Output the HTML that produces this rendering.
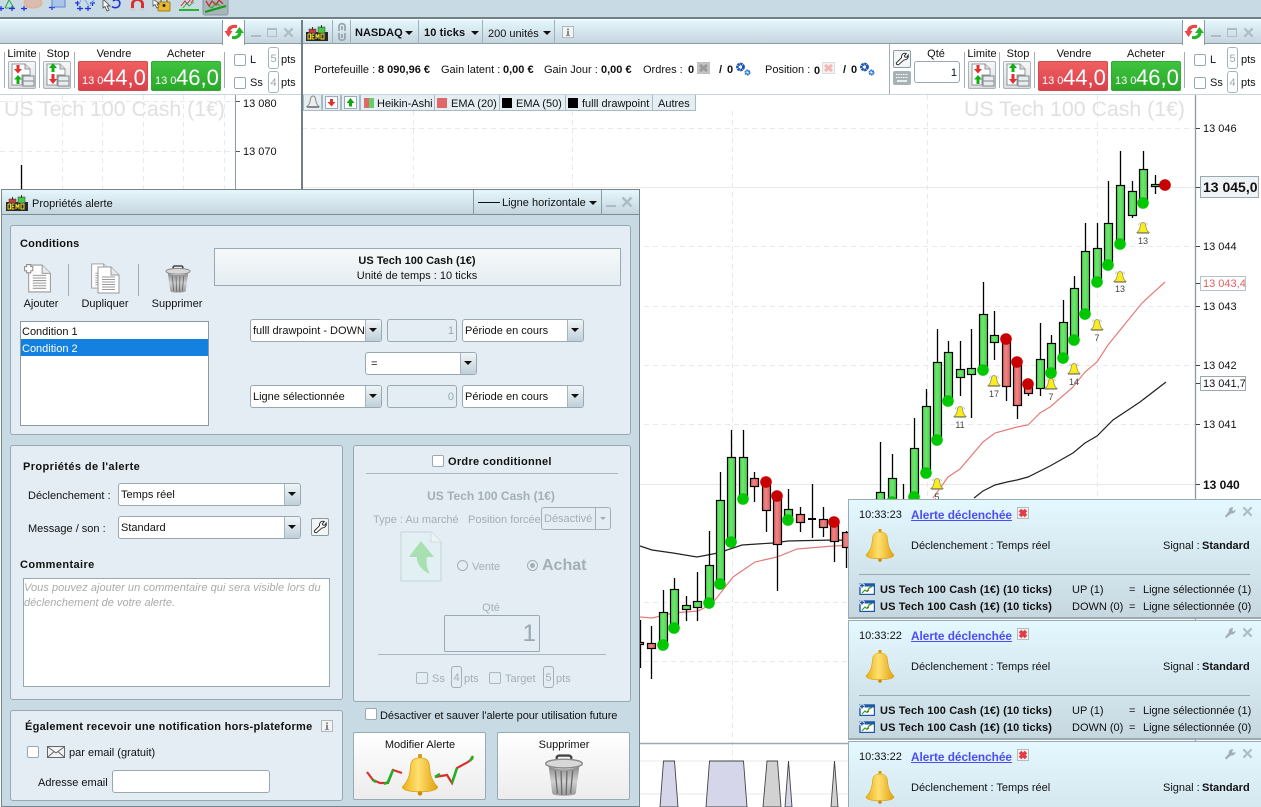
<!DOCTYPE html>
<html lang="fr"><head><meta charset="utf-8"><title>Propriétés alerte</title>
<style>
html,body{margin:0;padding:0;width:1261px;height:807px;overflow:hidden;background:#fff}
body{position:relative;font:11px/14px "Liberation Sans",Arial,sans-serif;color:#111}
.a,.t,.b{position:absolute;box-sizing:border-box}
.t{white-space:nowrap;height:14px;margin-top:1px}
.bd{font-weight:bold}
.c{text-align:center;transform:translateX(-50%)}
.title{background:linear-gradient(#e5f7fd,#c5d5de)}
.sep{position:absolute;width:1px;background:#9fb0ba}
.panel{position:absolute;box-sizing:border-box;background:#e3edf3;border:1px solid #97a8b2;border-radius:3px}
.sel{position:absolute;box-sizing:border-box;background:#fff;border:1px solid #98a9b3;border-radius:3px;height:23px;line-height:23px;padding-left:2px;white-space:nowrap;overflow:hidden}
.sel i{position:absolute;right:0;top:0;bottom:0;width:15px;background:linear-gradient(#f0f5f7,#bfd0d9);border-left:1px solid #a5b5be}
.sel i:after{content:"";position:absolute;left:3px;top:8px;border:4px solid transparent;border-top:4px solid #111;border-bottom:0}
.dis{position:absolute;box-sizing:border-box;background:#e3edf3;border:1px solid #98a9b3;border-radius:3px;text-align:right;color:#9aa8b0;padding-right:2px;line-height:23px;height:23px}
.ck{position:absolute;box-sizing:border-box;width:12px;height:12px;background:#fff;border:1px solid #98a9b3;border-radius:2px}
.ckd{background:#e3edf3;border-color:#a9b7bf}
.num{position:absolute;box-sizing:border-box;width:11px;height:22px;background:#fff;border:1px solid #a5b3bb;border-radius:3px;text-align:center;line-height:22px;color:#9aa8b0}
.sell,.buy{position:absolute;box-sizing:border-box;top:61px;width:70px;height:30px;border-radius:2px;color:#fff;white-space:nowrap}
.sell{background:linear-gradient(#f06060,#d8414b);border:1px solid #d04a50}
.buy{background:linear-gradient(#3fc43f,#2aa82a);border:1px solid #35a835}
.sell b,.buy b{position:absolute;left:3px;top:12px;font-weight:normal;font-size:11px;line-height:14px}
.sell u,.buy u{position:absolute;left:24px;top:3px;text-decoration:none;font-size:22px;line-height:26px}
.ob{position:absolute;top:61px;width:28px;height:28px;box-sizing:border-box;border:1px solid #a8b4ba;border-radius:2px;background:linear-gradient(#f7f7f7,#dcdcdc)}
.tb{position:absolute;top:95px;height:16px;box-sizing:border-box;background:#e4eef3;border:1px solid #a9bac4;border-top:0;line-height:19px;white-space:nowrap}
.sw{display:inline-block;width:10px;height:10px;vertical-align:-1px;margin:0 4px 0 2px}
.wb{position:absolute;box-sizing:border-box;background:#f3f6f7;border:1px solid #8b9ba3;border-radius:2px}
.notif{position:absolute;left:848px;width:413px;box-sizing:border-box;background:linear-gradient(#e4f8ff,#c6d7e0);border-left:1px solid #9aabb5;border-top:1px solid #9aabb5}
.big{position:absolute;box-sizing:border-box;background:linear-gradient(#fff,#ececec);border:1px solid #98a9b3;border-radius:2px}
.ax{font-size:11px}
.bl{font-size:9px;color:#444;line-height:10px;height:10px}
.wm{margin-top:0;height:24px;line-height:24px;font-size:21.300px;color:#e0e0e0}
.lk{color:#4c4cf4;text-decoration:underline;font-size:11.800px;font-weight:bold}
.nb{letter-spacing:.13px;font-weight:bold}
.tri{position:absolute;width:0;height:0;border-left:4px solid transparent;border-right:4px solid transparent;border-top:4px solid #111}
svg{position:absolute;display:block;overflow:visible}
</style></head><body>
<svg width="0" height="0" style="left:0;top:0">
<defs>
<linearGradient id="gg" x1="0" x2="1" y1="0" y2="0"><stop offset="0" stop-color="#4ed44e"/><stop offset=".45" stop-color="#6ce86c"/><stop offset="1" stop-color="#4ccc4c"/></linearGradient>
<linearGradient id="rg" x1="0" x2="1" y1="0" y2="0"><stop offset="0" stop-color="#dc5f5f"/><stop offset=".45" stop-color="#f08585"/><stop offset="1" stop-color="#d85a5a"/></linearGradient>
<linearGradient id="gold" x1="0" x2="1" y1="0" y2="0"><stop offset="0" stop-color="#eab016"/><stop offset=".45" stop-color="#ffe070"/><stop offset="1" stop-color="#e0a010"/></linearGradient>
<linearGradient id="tr" x1="0" x2="0" y1="0" y2="1"><stop offset="0" stop-color="#8a8a8a"/><stop offset=".5" stop-color="#d0d0d0"/><stop offset="1" stop-color="#999"/></linearGradient>
<symbol id="bell" viewBox="0 0 30 33"><rect x="13.5" y="0" width="3" height="4" fill="#d99a0a"/><path d="M15 3C10 3 8 5 7.600 9 7 16 6 21 1 26 2 29 9 29.800 15 29.800S28 29 29 26C24 21 23 16 22.400 9 22 5 20 3 15 3Z" fill="url(#gold)" stroke="#d9a010" stroke-width=".6"/><circle cx="15" cy="31" r="1.800" fill="#c98a10"/></symbol>
<symbol id="sb" viewBox="0 0 14 14"><path d="M7 1.500C5 1.500 4.400 3 4.200 5 4 8 3 10 1 11.500L13 11.500C11 10 10 8 9.800 5 9.600 3 9 1.500 7 1.500Z" fill="#fbec1e" stroke="#8f8f60" stroke-width=".8"/><rect x="1" y="11.400" width="12" height="1.300" fill="#8f8f60"/><path d="M2.500 4 3.500 1.500M11.500 4 10.500 1.500" stroke="#bbb" stroke-width=".8"/></symbol>
<symbol id="wr" viewBox="0 0 18 18"><path d="M3 15 2.500 13.500 8.500 7.500C8 5 9.500 2.500 12.500 2.500L13.800 3 11.500 5.500 12.500 7 14.500 7 16 4.500C16.500 7 15.500 10 11 10.200L5 15.500Z" fill="#fff" stroke="#222" stroke-width="1"/></symbol>
<symbol id="info" viewBox="0 0 12 12"><rect x=".5" y=".5" width="11" height="11" fill="#f2f5f6" stroke="#b0b8bc"/><rect x="5" y="2.500" width="2" height="1.800" fill="#888"/><rect x="5" y="5" width="2" height="4.500" fill="#888"/><rect x="4" y="9" width="4" height="1" fill="#888"/></symbol>
<symbol id="demo" viewBox="0 0 23 16"><rect x="0" y="7" width="22" height="9" fill="#262a2e"/><rect x="3" y="4" width="7" height="4" fill="#c83c3c" stroke="#333" stroke-width=".5"/><rect x="6" y="2" width="1" height="3" fill="#333"/><rect x="12" y="2" width="7" height="6" fill="#48c848" stroke="#333" stroke-width=".5"/><rect x="15" y="0" width="1" height="3" fill="#333"/><path d="M2 9v5h2.500V9H2M6 9v5h2.500M6 11.500h2M6 9h2.500M10 14V9l1.500 3L13 9v5M15 9h3v5h-3z" fill="none" stroke="#f5dd20" stroke-width="1"/></symbol>
<symbol id="refresh" viewBox="0 0 20 20"><path d="M3 9C3 5 7 2 13 3L13 6C9 5.500 7 7 6.500 9L8.500 9 4.500 15 .5 9Z" fill="#e84848"/><path d="M15.500 5 20 11 17.500 11C17.500 15 13 18 8 17L8 14C12 14.500 13.500 13 14 11L11 11Z" fill="#28b428"/></symbol>
<symbol id="lim" viewBox="0 0 26 26"><path d="M6 2H16L21 7V13H13V23H3V2Z" fill="#fff" stroke="#8c979d"/><path d="M16 2V7H21" fill="#ddd" stroke="#8c979d"/><path d="M7.500 3H10.500V7H13L9 11.500 5 7H7.500Z" fill="#e03030"/><path d="M9 13 13 17.500H10.500V22H7.500V17.500H5Z" fill="#10b010"/><rect x="14" y="14" width="11" height="5" fill="#e8ecee" stroke="#7c878d"/><rect x="14" y="19" width="11" height="5" fill="#e8ecee" stroke="#7c878d"/></symbol>
<symbol id="stp" viewBox="0 0 26 26"><path d="M6 2H16L21 7V13H13V23H3V2Z" fill="#fff" stroke="#8c979d"/><path d="M16 2V7H21" fill="#ddd" stroke="#8c979d"/><path d="M9 1 13 6H10.500V10H7.500V6H5Z" fill="#10b010"/><path d="M7.500 12H10.500V17H13L9 22 5 17H7.500Z" fill="#e03030"/><rect x="14" y="14" width="11" height="5" fill="#e8ecee" stroke="#7c878d"/><rect x="14" y="19" width="11" height="5" fill="#e8ecee" stroke="#7c878d"/></symbol>
<symbol id="gear" viewBox="0 0 16 14"><circle cx="5.500" cy="5" r="3" fill="none" stroke="#1850b0" stroke-width="2.800" stroke-dasharray="2.200 .5"/><circle cx="12.500" cy="10.500" r="2" fill="none" stroke="#1f6fd0" stroke-width="2" stroke-dasharray="1.600 .4"/></symbol>
<symbol id="xk" viewBox="0 0 12 12"><rect x=".5" y=".5" width="11" height="11" fill="#f3f3f3" stroke="#b5bcc0"/><path d="M3 3 9 9M9 3 3 9" stroke="#e23c48" stroke-width="3.600"/></symbol>
<symbol id="wg" viewBox="0 0 12 12"><path d="M1 10 2 11.500 7 7.500C9.500 8 11.500 6 11.500 3.500L9.500 5 8 4 9.500 1.500C6.500.5 4.500 2.500 4.800 5.500Z" fill="#a3adb3"/></symbol>
<symbol id="xg" viewBox="0 0 12 12"><path d="M1.500 1.500 10.500 10.500M10.500 1.500 1.500 10.500" stroke="#aebcc4" stroke-width="2.400"/></symbol>
<symbol id="nchart" viewBox="0 0 16 12"><rect x="1" y="1" width="14.500" height="10.500" fill="#fff" stroke="#1e56a8" stroke-width="1.400"/><rect x="1" y="1" width="14.500" height="2.500" fill="#1e56a8"/><path d="M3 10 6 7 8 8.500 10 5 13 3.500" fill="none" stroke="#20a820" stroke-width="1.200"/><path d="M8 8.500 10 7" stroke="#e03030"/><path d="M3 0V5M.5 2.500H5.500" stroke="#fff" stroke-width="3"/><path d="M3 .5V4.500M1 2.500H5" stroke="#1e56a8" stroke-width="1.500"/></symbol>
<symbol id="trash" viewBox="0 0 26 30"><path d="M8 5V2.500C8 1.500 9 1 10 1H16C17 1 18 1.500 18 2.500V5" fill="none" stroke="#444" stroke-width="1.600"/><ellipse cx="13" cy="6.500" rx="12.500" ry="3" fill="#d8d8d8" stroke="#8a8a8a"/><path d="M2.500 8.500 5 27C5.500 29 20.500 29 21 27L23.500 8.500C18 11 8 11 2.500 8.500Z" fill="url(#tr)"/><path d="M7 11 8.500 27M11 11.500 11.500 28M15 11.500 14.500 28M19 11 17.500 27" stroke="#6c6c6c" stroke-width=".9"/></symbol>
<symbol id="page" viewBox="0 0 28 30"><path d="M5 2H18L26 10V28H5Z" fill="#fff" stroke="#999"/><path d="M18 2V10H26" fill="#e8e8e8" stroke="#999"/><path d="M9 12H22M9 14.500H22M9 17H22M9 19.500H22M9 22H22M9 24.500H22" stroke="#9a9a9a"/></symbol>
</defs></svg>

<div class="a" style="left:0;top:0;width:1261px;height:19px;background:#c8dae4;border-bottom:2px solid #6f8089"></div>
<svg width="235" height="18" viewBox="0 0 235 18" style="left:0;top:0" fill="none">
<rect x="203" y="-4" width="25" height="19" rx="2" fill="#a8b5bc" stroke="#8a989f"/>
<path d="M5 8 9 0M9 0 14 8M5 8H14" stroke="#22aa44" stroke-width="1"/>
<path d="M-2 8.500H4M1 6V11M9 8.500H15M12 6V11M21 8.500H27M24 6V11M49 7.500H55M52 5V10M75 3H80M77.500 1V6M90 3H95M92.500 1V6M77 8.500H83M80 6V11M85 8.500H91M88 6V11" stroke="#1f30e0" stroke-width="1.200"/>
<ellipse cx="33" cy="3" rx="9" ry="5" fill="#d8bcaf" stroke="#f0a878"/>
<rect x="52" y="-3" width="13" height="10" fill="#a9c6e8" stroke="#5a86d8"/>
<path d="M78 6 81 0M89 6 85 0M90 6 94 0" stroke="#7aa8ea"/>
<path d="M103 -1V8L105 6.500 107 11 109 10 107 6H110Z" fill="#fff" stroke="#555" stroke-width=".9"/>
<path d="M113 1C117 -2 121 1 119.500 5 118.500 8 114 8.500 112 6.500" stroke="#2030e0" stroke-width="1.600"/>
<path d="M131 10V4C131 -3 144 -3 144 4V10H141V4C141 0 134 0 134 4V10Z" fill="#d83030"/><rect x="130.500" y="8" width="4" height="3" fill="#ccc"/><rect x="140.500" y="8" width="4" height="3" fill="#ccc"/>
<rect x="158" y="2" width="12" height="9" rx="1" fill="#e8b830" stroke="#aa8010"/><path d="M161 2V0M167 2V0" stroke="#777" stroke-width="1.500"/><circle cx="164" cy="5.500" r="1.500" fill="#222"/><path d="M153 -1V6L155 4.500 157 8 158.500 7 157 4H159.500Z" fill="#fff" stroke="#555" stroke-width=".8"/>
<path d="M181 6 185 1 187 4 191 -1M191 3 194 -1" stroke="#d03030"/><path d="M179 10H199" stroke="#10b010" stroke-width="1.800"/><path d="M183 8 187 3 189 6 194 2" stroke="#20a020" stroke-width=".8"/>
<path d="M205 12 226 6" stroke="#10a010" stroke-width="2"/><path d="M206 1 209 6 212 1 216 5 219 0 223 4" stroke="#c83030" stroke-width="1.300"/><path d="M209 6 212 8 216 3 220 6" stroke="#20a020"/>
</svg>

<!-- MAIN CHART -->
<svg width="1261" height="807" viewBox="0 0 1261 807" style="left:0;top:0" fill="none">
<g stroke="#e9e9e9" stroke-width="1">
<path d="M0 101.500H236M0 151.500H236M302 128.500H1196M302 246.500H1196M302 306.500H1196M302 365.500H1196M302 424.500H1196M302 602.500H1196M302 661.500H1196" stroke-dasharray="5 4"/>
<path d="M62.500 95V190M102.500 95V190M143.500 95V190M183.500 95V190M224.500 95V190M413.500 111V743M572.500 111V743M732.500 111V807M927.500 95V500M1097.500 95V500" stroke-dasharray="5 4"/>
<path d="M22 95V190M302 187.500H1196M302 484.500H1196M640 761H850M640 794H850" stroke="#e9e9e9"/>
</g>
<path d="M21.500 165V190" stroke="#000" stroke-width="1.300"/>
<path d="M235.500 95V190" stroke="#8b9ba3"/>
<path d="M236 101.500H240M236 151.500H240" stroke="#555"/>
<path d="M640 743.500H850" stroke="#9aabb5" stroke-width="1.500"/>
<path d="M1195.500 95V743" stroke="#8b9ba3" stroke-width="1.300"/>
<path d="M1196 128.500H1200M1196 187.500H1200M1196 246.500H1200M1196 283.500H1200M1196 306.500H1200M1196 365.500H1200M1196 383.500H1200M1196 424.500H1200M1196 484.500H1200" stroke="#444"/>
<path d="M660 807 663.500 761H674.500L678 807ZM706 807 709.500 761H743.500L747 807ZM785 807 788.500 761 792 807Z" fill="#d5d6ea" stroke="#444" stroke-width=".9"/>
<path d="M763 807 767 761H777.500L781 807ZM831 807 834.500 761 838 807Z" fill="#d2d2d2" stroke="#444" stroke-width=".9"/>
<path d="M640 617 652 618 673 613 698 611 708 606 715 600 733 577 755 562 777 557 797 549 833 546 880 544M933 498 948 477 960 469 983 442 995 433 1017 427 1028 425 1040 413 1050 407 1072 388 1085 372 1097 362 1108 345 1142 303 1165 282" stroke="#e67a7a" stroke-width="1.200"/>
<path d="M640 546 652 550 673 553 697 557 718 553 742 545 773 543 788 541 833 540 880 541M974 498 983 491 995 485 1007 482 1017 480 1028 477 1050 466 1073 453 1085 443 1097 436 1113 420 1140 402 1166 382" stroke="#222" stroke-width="1.200"/>
<!-- wicks -->
<path stroke="#000" stroke-width="1.300" d="M640.500 620V668M651.500 626V679M663.500 590V645M674.500 578V628M686.500 596V621M697.500 572V621M709.500 531V603M720.500 472V584M731.500 430V542M743.500 430V499M754.500 472V502M766.500 482V532M777.500 496V591M788.500 489V520M800.500 507V532M812.500 484V538M823.500 507V537M834.500 522V562M846.500 531V568M880.500 442V499M892.500 454V499M903.500 484V499M914.500 418V497M926.500 389V473M937.500 329V440M948.500 341V401M960.500 341V396M971.500 329V418M983.500 282V370M994.500 311V360M1006.500 339V401M1017.500 362V419M1028.500 384V396M1040.500 323V396M1051.500 335V373M1063.500 300V358M1074.500 276V340M1085.500 223V314M1097.500 223V282M1108.500 181V265M1120.500 151V244M1132.500 181V218M1143.500 151V203M1155.500 175V194"/>
<!-- red bodies -->
<g fill="url(#rg)" stroke="#000" stroke-width="1.200">
<rect x="647.500" y="643.500" width="8" height="5"/><rect x="750.500" y="478.500" width="8" height="8"/><rect x="762.500" y="482.500" width="8" height="28"/><rect x="773.500" y="496.500" width="8" height="48"/><rect x="796.500" y="514.500" width="8" height="8"/><rect x="819.500" y="519.500" width="8" height="8"/><rect x="830.500" y="522.500" width="8" height="19"/><rect x="842.500" y="532.500" width="8" height="15"/><rect x="1002.500" y="339.500" width="8" height="47"/><rect x="1013.500" y="362.500" width="8" height="43"/><rect x="1024.500" y="384.500" width="8" height="9"/><rect x="636.500" y="642.500" width="7" height="2"/>
</g>
<!-- green bodies -->
<g fill="url(#gg)" stroke="#000" stroke-width="1.200">
<rect x="659.500" y="612.500" width="8" height="33"/><rect x="670.500" y="589.500" width="8" height="39"/><rect x="682.500" y="605.500" width="8" height="4"/><rect x="693.500" y="601.500" width="8" height="6"/><rect x="705.500" y="565.500" width="8" height="38"/><rect x="716.500" y="500.500" width="8" height="84"/><rect x="727.500" y="457.500" width="8" height="85"/><rect x="739.500" y="457.500" width="8" height="42"/><rect x="784.500" y="509.500" width="8" height="11"/><rect x="876.500" y="492.500" width="8" height="10"/><rect x="888.500" y="478.500" width="8" height="24"/><rect x="910.500" y="448.500" width="8" height="49"/><rect x="922.500" y="406.500" width="8" height="67"/><rect x="933.500" y="362.500" width="8" height="78"/><rect x="944.500" y="352.500" width="8" height="49"/><rect x="956.500" y="369.500" width="8" height="8"/><rect x="967.500" y="368.500" width="8" height="6"/><rect x="979.500" y="314.500" width="8" height="56"/><rect x="990.500" y="335.500" width="8" height="7"/><rect x="1036.500" y="359.500" width="8" height="29"/><rect x="1047.500" y="343.500" width="8" height="30"/><rect x="1059.500" y="322.500" width="8" height="36"/><rect x="1070.500" y="288.500" width="8" height="52"/><rect x="1081.500" y="251.500" width="8" height="63"/><rect x="1093.500" y="248.500" width="8" height="34"/><rect x="1104.500" y="223.500" width="8" height="42"/><rect x="1116.500" y="185.500" width="8" height="59"/><rect x="1128.500" y="191.500" width="8" height="24"/><rect x="1139.500" y="169.500" width="8" height="34"/><rect x="1151.500" y="184.500" width="8" height="2"/>
</g>
<path d="M808 519H816" stroke="#000" stroke-width="2"/>
<g fill="#00c800">
<circle cx="663" cy="645" r="5.800"/><circle cx="674" cy="628" r="5.800"/><circle cx="709" cy="603" r="5.800"/><circle cx="720" cy="584" r="5.800"/><circle cx="731" cy="542" r="5.800"/><circle cx="743" cy="499" r="5.800"/><circle cx="788" cy="520" r="5.800"/><circle cx="892" cy="502" r="5.800"/><circle cx="914" cy="497" r="5.800"/><circle cx="926" cy="473" r="5.800"/><circle cx="937" cy="440" r="5.800"/><circle cx="948" cy="401" r="5.800"/><circle cx="983" cy="370" r="5.800"/><circle cx="1051" cy="373" r="5.800"/><circle cx="1063" cy="358" r="5.800"/><circle cx="1074" cy="340" r="5.800"/><circle cx="1085" cy="314" r="5.800"/><circle cx="1097" cy="282" r="5.800"/><circle cx="1108" cy="265" r="5.800"/><circle cx="1120" cy="244" r="5.800"/><circle cx="1143" cy="203" r="5.800"/>
</g>
<g fill="#c80000">
<circle cx="766" cy="482" r="5.800"/><circle cx="777" cy="496" r="5.800"/><circle cx="834" cy="522" r="5.800"/><circle cx="1006" cy="339" r="5.800"/><circle cx="1017" cy="362" r="5.800"/><circle cx="1028" cy="384" r="5.800"/><circle cx="1165" cy="185" r="5.800"/>
</g>
<use href="#sb" x="1136" y="221" width="14" height="14"/><use href="#sb" x="1113" y="270" width="14" height="14"/><use href="#sb" x="1090" y="318" width="14" height="14"/><use href="#sb" x="1067" y="362" width="14" height="14"/><use href="#sb" x="1044" y="377" width="14" height="14"/><use href="#sb" x="987" y="374" width="14" height="14"/><use href="#sb" x="953" y="405" width="14" height="14"/><use href="#sb" x="930" y="477" width="14" height="14"/>
</svg>
<div class="t bl c" style="left:1143px;top:235px">13</div><div class="t bl c" style="left:1120px;top:283px">13</div><div class="t bl c" style="left:1097px;top:332px">7</div><div class="t bl c" style="left:1074px;top:376px">14</div><div class="t bl c" style="left:1051px;top:391px">7</div><div class="t bl c" style="left:994px;top:388px">17</div><div class="t bl c" style="left:960px;top:419px">11</div><div class="t bl c" style="left:937px;top:491px">5</div>

<div class="t wm" style="left:4px;top:97px">US Tech 100 Cash (1€)</div>
<div class="t wm" style="left:964px;top:97px">US Tech 100 Cash (1€)</div>
<div class="t ax" style="left:243px;top:96px">13 080</div><div class="t ax" style="left:243px;top:144px">13 070</div>
<div class="t ax" style="left:1203px;top:121px">13 046</div>
<div class="t ax" style="left:1203px;top:239px">13 044</div>
<div class="t ax" style="left:1203px;top:299px">13 043</div>
<div class="t ax" style="left:1203px;top:358px">13 042</div>
<div class="t ax" style="left:1203px;top:417px">13 041</div>
<div class="t bd" style="left:1203px;top:477px;font-size:12px">13 040</div>
<div class="a" style="left:1200px;top:176px;width:59px;height:22px;background:#f0f3f5;border:1px solid #9aa8b0;line-height:21px;font-size:14px;font-weight:bold;padding-left:2px;white-space:nowrap">13 045,0</div>
<div class="a" style="left:1200px;top:276px;width:46px;height:15px;background:#fff;border:1px solid #b5c2c9;line-height:14px;color:#e06060;padding-left:2px;white-space:nowrap;overflow:hidden">13 043,4</div>
<div class="a" style="left:1200px;top:376px;width:46px;height:15px;background:#fff;border:1px solid #9aa8b0;line-height:14px;padding-left:2px;white-space:nowrap;overflow:hidden">13 041,7</div>

<!-- LEFT PANE HEADER -->
<div class="a title" style="left:0;top:20px;width:301px;height:24px;border-bottom:1px solid #8b9ba3"></div>
<div class="a" style="left:222px;top:20px;width:23px;height:25px;background:#fff;border-left:1px solid #8b9ba3;border-right:1px solid #8b9ba3"></div>
<svg width="20" height="20" style="left:224px;top:22px"><use href="#refresh" width="20" height="20"/></svg>
<div class="a" style="left:251px;top:35px;width:10px;height:2px;background:#aebcc4"></div>
<div class="a" style="left:267px;top:28px;width:10px;height:9px;border:1px solid #aebcc4;border-top-width:2px"></div>
<svg width="11" height="11" style="left:283px;top:27px"><use href="#xg" width="11" height="11"/></svg>
<div class="a" style="left:301px;top:20px;width:2px;height:170px;background:#6f8089"></div>
<div class="a" style="left:0;top:94px;width:301px;height:1px;background:#c7d6de"></div>
<div class="sep" style="left:4px;top:52px;height:36px"></div><div class="sep" style="left:39px;top:52px;height:36px"></div><div class="sep" style="left:74px;top:52px;height:36px"></div><div class="sep" style="left:224px;top:52px;height:36px"></div>
<div class="t c" style="left:22px;top:46px">Limite</div><div class="t c" style="left:58px;top:46px">Stop</div><div class="t c" style="left:114px;top:46px">Vendre</div><div class="t c" style="left:186px;top:46px">Acheter</div>
<div class="ob" style="left:8px"><svg width="26" height="26" style="left:0;top:0"><use href="#lim" width="26" height="26"/></svg></div>
<div class="ob" style="left:43px"><svg width="26" height="26" style="left:0;top:0"><use href="#stp" width="26" height="26"/></svg></div>
<div class="sell" style="left:78px"><b>13 0</b><u>44,0</u></div>
<div class="buy" style="left:151px"><b>13 0</b><u>46,0</u></div>
<div class="ck" style="left:234px;top:54px"></div><div class="t" style="left:250px;top:52px">L</div><div class="num" style="left:268px;top:47px">5</div><div class="t" style="left:281px;top:52px">pts</div>
<div class="ck" style="left:234px;top:77px"></div><div class="t" style="left:250px;top:75px">Ss</div><div class="num" style="left:268px;top:71px">4</div><div class="t" style="left:281px;top:75px">pts</div>

<!-- RIGHT PANE HEADER -->
<div class="a title" style="left:303px;top:20px;width:958px;height:24px;border-bottom:1px solid #8b9ba3"></div>
<svg width="23" height="16" style="left:306px;top:25px"><use href="#demo" width="23" height="16"/></svg>
<div class="sep" style="left:332px;top:20px;height:24px"></div><div class="sep" style="left:350px;top:20px;height:24px"></div><div class="sep" style="left:418px;top:20px;height:24px"></div><div class="sep" style="left:482px;top:20px;height:24px"></div><div class="sep" style="left:554px;top:20px;height:24px"></div>
<svg width="10" height="20" viewBox="0 0 10 20" style="left:337px;top:22px" fill="none" stroke="#9aa4aa" stroke-width="1.800"><path d="M2 9V4C2 1 8 1 8 4V9M5 4V8"/><path d="M2 11V16C2 19 8 19 8 16V11M5 12V16"/></svg>
<div class="t bd" style="left:355px;top:25px">NASDAQ</div><div class="tri" style="left:405px;top:31px"></div>
<div class="t bd" style="left:424px;top:25px;letter-spacing:.1px">10 ticks</div><div class="tri" style="left:471px;top:31px"></div>
<div class="t" style="left:488px;top:26px">200 unités</div><div class="tri" style="left:543px;top:31px"></div>
<svg width="12" height="12" style="left:562px;top:26px"><use href="#info" width="12" height="12"/></svg>
<div class="a" style="left:1182px;top:20px;width:23px;height:25px;background:#fff;border-left:1px solid #8b9ba3;border-right:1px solid #8b9ba3"></div>
<svg width="20" height="20" style="left:1184px;top:22px"><use href="#refresh" width="20" height="20"/></svg>
<div class="a" style="left:1211px;top:35px;width:10px;height:2px;background:#aebcc4"></div>
<div class="a" style="left:1227px;top:28px;width:10px;height:9px;border:1px solid #aebcc4;border-top-width:2px"></div>
<svg width="11" height="11" style="left:1243px;top:27px"><use href="#xg" width="11" height="11"/></svg>
<div class="a" style="left:303px;top:94px;width:958px;height:1px;background:#c7d6de"></div>

<div class="t" style="left:314px;top:62px">Portefeuille :</div><div class="t bd" style="left:378px;top:62px">8 090,96 €</div>
<div class="t" style="left:441px;top:62px">Gain latent :</div><div class="t bd" style="left:503px;top:62px">0,00 €</div>
<div class="t" style="left:544px;top:62px">Gain Jour :</div><div class="t bd" style="left:601px;top:62px">0,00 €</div>
<div class="t" style="left:643px;top:62px">Ordres :</div><div class="t bd" style="left:688px;top:62px">0</div>
<svg width="13" height="12" style="left:697px;top:62px"><rect width="13" height="12" fill="#c2c2c2"/><path d="M3 3 10 9M10 3 3 9" stroke="#9a9a9a" stroke-width="3"/></svg>
<div class="t bd" style="left:719px;top:62px">/</div><div class="t bd" style="left:727px;top:62px">0</div>
<svg width="16" height="14" style="left:735px;top:62px"><use href="#gear" width="16" height="14"/></svg>
<div class="t" style="left:765px;top:62px">Position :</div><div class="t bd" style="left:814px;top:63px">0</div>
<svg width="13" height="12" style="left:822px;top:62px"><rect x=".5" y=".5" width="12" height="11" fill="#f4f4f4" stroke="#ddd"/><path d="M3 3 10 9M10 3 3 9" stroke="#f6b5b5" stroke-width="3"/></svg>
<div class="t bd" style="left:843px;top:62px">/</div><div class="t bd" style="left:851px;top:62px">0</div>
<svg width="16" height="14" style="left:859px;top:62px"><use href="#gear" width="16" height="14"/></svg>

<div class="sep" style="left:889px;top:44px;height:50px"></div>
<div class="wb" style="left:893px;top:50px;width:18px;height:18px"><svg width="16" height="16" style="left:0;top:0"><use href="#wr" width="16" height="16"/></svg></div>
<svg width="18" height="14" viewBox="0 0 18 14" style="left:893px;top:71px"><rect width="18" height="14" rx="2" fill="#a6b2b8"/><path d="M3 3.500H15M3 6.500H15" stroke="#fff" stroke-dasharray="1.500 .8"/><path d="M4 10H14" stroke="#fff" stroke-width="1.500"/></svg>
<div class="t c" style="left:936px;top:46px">Qté</div>
<div class="a" style="left:914px;top:61px;width:46px;height:22px;background:#fff;border:1px solid #98a9b3;border-radius:3px;text-align:right;padding-right:2px;line-height:22px">1</div>
<div class="sep" style="left:964px;top:52px;height:36px"></div><div class="sep" style="left:999px;top:52px;height:36px"></div><div class="sep" style="left:1034px;top:52px;height:36px"></div><div class="sep" style="left:1184px;top:52px;height:36px"></div>
<div class="t c" style="left:982px;top:46px">Limite</div><div class="t c" style="left:1018px;top:46px">Stop</div><div class="t c" style="left:1074px;top:46px">Vendre</div><div class="t c" style="left:1146px;top:46px">Acheter</div>
<div class="ob" style="left:968px"><svg width="26" height="26" style="left:0;top:0"><use href="#lim" width="26" height="26"/></svg></div>
<div class="ob" style="left:1003px"><svg width="26" height="26" style="left:0;top:0"><use href="#stp" width="26" height="26"/></svg></div>
<div class="sell" style="left:1038px"><b>13 0</b><u>44,0</u></div>
<div class="buy" style="left:1111px"><b>13 0</b><u>46,0</u></div>
<div class="ck" style="left:1194px;top:54px"></div><div class="t" style="left:1210px;top:52px">L</div><div class="num" style="left:1227px;top:47px">5</div><div class="t" style="left:1241px;top:52px">pts</div>
<div class="ck" style="left:1194px;top:77px"></div><div class="t" style="left:1210px;top:75px">Ss</div><div class="num" style="left:1227px;top:71px">4</div><div class="t" style="left:1241px;top:75px">pts</div>

<!-- chart toolbar -->
<div class="tb" style="left:303px;width:19px"><svg width="14" height="14" style="left:2px;top:0"><path d="M7 1C5 1 4.500 3 4.300 5 4 8 3 10 1 11.500H13C11 10 10 8 9.700 5 9.500 3 9 1 7 1ZM1 12.500H13" fill="#eee" stroke="#888"/></svg></div>
<div class="tb" style="left:322px;width:19px"><svg width="13" height="13" style="left:2px;top:1px"><rect x=".5" y=".5" width="12" height="12" fill="#fff" stroke="#9ab"/><path d="M5 3H8V6H10.500L6.500 10.500 2.500 6H5Z" fill="#e03030"/></svg></div>
<div class="tb" style="left:341px;width:19px"><svg width="13" height="13" style="left:2px;top:1px"><rect x=".5" y=".5" width="12" height="12" fill="#fff" stroke="#9ab"/><path d="M6.500 2 10.500 7H8V10.500H5V7H2.500Z" fill="#10a810"/></svg></div>
<div class="tb" style="left:360px;width:75px"><svg width="10" height="10" style="left:3px;top:3px"><rect x="5" width="5" height="10" fill="#68cc68"/><rect width="5" height="10" fill="#e06a6a"/></svg><span style="margin-left:16px">Heikin-Ashi</span></div>
<div class="tb" style="left:434px;width:66px"><i class="sw" style="background:#e06868"></i>EMA (20)</div>
<div class="tb" style="left:499px;width:67px"><i class="sw" style="background:#000"></i>EMA (50)</div>
<div class="tb" style="left:565px;width:88px"><i class="sw" style="background:#000"></i>fulll drawpoint</div>
<div class="tb" style="left:652px;width:44px;padding-left:5px">Autres</div>

<!-- NOTIFICATIONS -->
<div class="notif" style="top:499px;height:120px;border-bottom:2px solid #9aabb5"></div>
<div class="notif" style="top:620px;height:120px;border-bottom:2px solid #9aabb5"></div>
<div class="notif" style="top:741px;height:66px;background:linear-gradient(#e4f8ff,#d5e7ef)"></div>

<div class="t" style="left:859px;top:507px">10:33:23</div><div class="t lk" style="left:911px;top:507px">Alerte déclenchée</div>
<svg width="12" height="12" style="left:1017px;top:507px"><use href="#xk" width="12" height="12"/></svg><svg width="12" height="12" style="left:1224px;top:506px"><use href="#wg" width="12" height="12"/></svg><svg width="11" height="11" style="left:1242px;top:506px"><use href="#xg" width="11" height="11"/></svg>
<svg width="30" height="33" style="left:865px;top:529px"><use href="#bell" width="30" height="33"/></svg>
<div class="t" style="left:911px;top:538px">Déclenchement : Temps réel</div><div class="t" style="left:1163px;top:538px">Signal :</div><div class="t bd" style="left:1202px;top:538px">Standard</div>
<div class="a" style="left:859px;top:574px;width:391px;height:1px;background:#98a9b3"></div>
<svg width="16" height="12" style="left:859px;top:583px"><use href="#nchart" width="16" height="12"/></svg><div class="t nb" style="left:880px;top:582px">US Tech 100 Cash (1€) (10 ticks)</div><div class="t" style="left:1072px;top:582px">UP (1)</div><div class="t" style="left:1129px;top:582px">=</div><div class="t" style="left:1143px;top:582px">Ligne sélectionnée (1)</div>
<svg width="16" height="12" style="left:859px;top:600px"><use href="#nchart" width="16" height="12"/></svg><div class="t nb" style="left:880px;top:599px">US Tech 100 Cash (1€) (10 ticks)</div><div class="t" style="left:1072px;top:599px">DOWN (0)</div><div class="t" style="left:1129px;top:599px">=</div><div class="t" style="left:1143px;top:599px">Ligne sélectionnée (0)</div>

<div class="t" style="left:859px;top:628px">10:33:22</div><div class="t lk" style="left:911px;top:628px">Alerte déclenchée</div>
<svg width="12" height="12" style="left:1017px;top:628px"><use href="#xk" width="12" height="12"/></svg><svg width="12" height="12" style="left:1224px;top:627px"><use href="#wg" width="12" height="12"/></svg><svg width="11" height="11" style="left:1242px;top:627px"><use href="#xg" width="11" height="11"/></svg>
<svg width="30" height="33" style="left:865px;top:650px"><use href="#bell" width="30" height="33"/></svg>
<div class="t" style="left:911px;top:659px">Déclenchement : Temps réel</div><div class="t" style="left:1163px;top:659px">Signal :</div><div class="t bd" style="left:1202px;top:659px">Standard</div>
<div class="a" style="left:859px;top:695px;width:391px;height:1px;background:#98a9b3"></div>
<svg width="16" height="12" style="left:859px;top:704px"><use href="#nchart" width="16" height="12"/></svg><div class="t nb" style="left:880px;top:703px">US Tech 100 Cash (1€) (10 ticks)</div><div class="t" style="left:1072px;top:703px">UP (1)</div><div class="t" style="left:1129px;top:703px">=</div><div class="t" style="left:1143px;top:703px">Ligne sélectionnée (1)</div>
<svg width="16" height="12" style="left:859px;top:721px"><use href="#nchart" width="16" height="12"/></svg><div class="t nb" style="left:880px;top:720px">US Tech 100 Cash (1€) (10 ticks)</div><div class="t" style="left:1072px;top:720px">DOWN (0)</div><div class="t" style="left:1129px;top:720px">=</div><div class="t" style="left:1143px;top:720px">Ligne sélectionnée (0)</div>

<div class="t" style="left:859px;top:749px">10:33:22</div><div class="t lk" style="left:911px;top:749px">Alerte déclenchée</div>
<svg width="12" height="12" style="left:1017px;top:749px"><use href="#xk" width="12" height="12"/></svg><svg width="12" height="12" style="left:1224px;top:748px"><use href="#wg" width="12" height="12"/></svg><svg width="11" height="11" style="left:1242px;top:748px"><use href="#xg" width="11" height="11"/></svg>
<svg width="30" height="33" style="left:865px;top:771px"><use href="#bell" width="30" height="33"/></svg>
<div class="t" style="left:911px;top:780px">Déclenchement : Temps réel</div><div class="t" style="left:1163px;top:780px">Signal :</div><div class="t bd" style="left:1202px;top:780px">Standard</div>

<!-- DIALOG -->
<div class="a" style="left:1px;top:189px;width:639px;height:618px;background:#c8dae4;border:1px solid #75868f"></div>
<div class="a title" style="left:2px;top:190px;width:637px;height:25px;border-bottom:1px solid #7d8d96"></div>
<svg width="23" height="16" style="left:6px;top:195px"><use href="#demo" width="23" height="16"/></svg>
<div class="t" style="left:32px;top:196px">Propriétés alerte</div>
<div class="sep" style="left:473px;top:190px;height:25px;background:#8b9ba3"></div><div class="sep" style="left:601px;top:190px;height:25px;background:#8b9ba3"></div>
<div class="a" style="left:478px;top:202px;width:22px;height:1px;background:#111"></div>
<div class="t" style="left:502px;top:195px">Ligne horizontale</div><div class="tri" style="left:589px;top:201px"></div>
<div class="a" style="left:606px;top:205px;width:10px;height:2px;background:#aebcc4"></div>
<svg width="12" height="12" style="left:621px;top:196px"><use href="#xg" width="12" height="12"/></svg>

<!-- Panel conditions -->
<div class="panel" style="left:10px;top:225px;width:621px;height:210px"></div>
<div class="t bd" style="left:20px;top:236px;letter-spacing:.2px">Conditions</div>
<svg width="30" height="31" viewBox="0 0 28 30" style="left:23px;top:263px"><use href="#page" width="28" height="30"/><path d="M5 1V10M0.500 5.500H9.500" stroke="#8a8a8a" stroke-width="5"/><path d="M5 2V9M1.500 5.500H8.500" stroke="#fff" stroke-width="3"/></svg>
<div class="t c" style="left:41px;top:296px">Ajouter</div>
<div class="sep" style="left:68px;top:264px;height:32px"></div>
<svg width="30" height="32" viewBox="0 0 30 32" style="left:90px;top:263px"><use href="#page" x="-3" y="-1" width="26" height="28"/><use href="#page" x="3" y="2" width="28" height="30"/></svg>
<div class="t c" style="left:105px;top:296px">Dupliquer</div>
<div class="sep" style="left:138px;top:264px;height:32px"></div>
<svg width="26" height="29" style="left:165px;top:265px"><use href="#trash" width="26" height="29"/></svg>
<div class="t c" style="left:177px;top:296px">Supprimer</div>
<div class="a" style="left:20px;top:321px;width:189px;height:105px;background:#fff;border:1px solid #8b9ba3"></div>
<div class="a" style="left:21px;top:339px;width:187px;height:17px;background:#1480e0"></div>
<div class="t" style="left:22px;top:324px">Condition 1</div><div class="t" style="left:22px;top:341px;color:#fff">Condition 2</div>
<div class="a" style="left:214px;top:248px;width:407px;height:38px;background:linear-gradient(#f6f9fa,#e4edf1);border:1px solid #98a9b3"></div>
<div class="t bd c" style="left:417px;top:253px">US Tech 100 Cash (1€)</div><div class="t c" style="left:417px;top:268px">Unité de temps : 10 ticks</div>
<div class="sel" style="left:250px;top:319px;width:132px">fulll drawpoint - DOWN<i></i></div>
<div class="dis" style="left:387px;top:319px;width:70px">1</div>
<div class="sel" style="left:462px;top:319px;width:122px">Période en cours<i></i></div>
<div class="sel" style="left:365px;top:352px;width:112px;padding-left:5px">=<i></i></div>
<div class="sel" style="left:250px;top:385px;width:132px">Ligne sélectionnée<i></i></div>
<div class="dis" style="left:387px;top:385px;width:70px">0</div>
<div class="sel" style="left:462px;top:385px;width:122px">Période en cours<i></i></div>

<!-- Panel propriétés -->
<div class="panel" style="left:10px;top:445px;width:333px;height:255px"></div>
<div class="t bd" style="left:23px;top:459px;letter-spacing:.4px">Propriétés de l'alerte</div>
<div class="t" style="left:28px;top:488px">Déclenchement :</div>
<div class="sel" style="left:118px;top:483px;width:183px">Temps réel<i></i></div>
<div class="t" style="left:28px;top:521px">Message / son :</div>
<div class="sel" style="left:118px;top:516px;width:183px">Standard<i></i></div>
<div class="wb" style="left:311px;top:518px;width:18px;height:18px"><svg width="16" height="16" style="left:0;top:0"><use href="#wr" width="16" height="16"/></svg></div>
<div class="t bd" style="left:20px;top:557px;letter-spacing:.4px">Commentaire</div>
<div class="a" style="left:23px;top:578px;width:307px;height:109px;background:#fff;border:1px solid #98a9b3"></div>
<div class="t" style="left:24px;top:580px;font-style:italic;color:#aaa;letter-spacing:.05px">Vous pouvez ajouter un commentaire qui sera visible lors du</div>
<div class="t" style="left:24px;top:595px;font-style:italic;color:#aaa">déclenchement de votre alerte.</div>

<!-- Panel email -->
<div class="panel" style="left:10px;top:710px;width:333px;height:91px"></div>
<div class="t bd" style="left:25px;top:719px;letter-spacing:.28px">Également recevoir une notification hors-plateforme</div>
<svg width="12" height="12" style="left:321px;top:720px"><use href="#info" width="12" height="12"/></svg>
<div class="ck" style="left:27px;top:746px"></div>
<svg width="18" height="12" style="left:47px;top:746px"><rect x=".5" y=".5" width="17" height="11" fill="#f2f5f6" stroke="#666"/><path d="M1 1 9 7 17 1M1 11 7 5.500M17 11 11 5.500" fill="none" stroke="#666"/></svg>
<div class="t" style="left:69px;top:745px">par email (gratuit)</div>
<div class="t" style="left:38px;top:775px">Adresse email</div>
<div class="a" style="left:112px;top:770px;width:158px;height:23px;background:#fff;border:1px solid #98a9b3;border-radius:3px"></div>

<!-- Panel ordre -->
<div class="panel" style="left:353px;top:445px;width:278px;height:257px"></div>
<div class="ck" style="left:432px;top:455px"></div><div class="t bd" style="left:448px;top:454px;letter-spacing:.3px">Ordre conditionnel</div>
<div class="a" style="left:366px;top:473px;width:252px;height:1px;background:#aab8c0"></div>
<div class="t bd c" style="left:491px;top:488px;color:#a3afb6;font-size:12px">US Tech 100 Cash (1€)</div>
<div class="t" style="left:373px;top:512px;color:#a3afb6">Type : Au marché</div>
<div class="t" style="left:468px;top:512px;color:#a3afb6">Position forcée</div>
<div class="a" style="left:541px;top:507px;width:70px;height:23px;border:1px solid #a3afb6;border-radius:3px;color:#a3afb6;line-height:23px;padding-left:2px;white-space:nowrap;overflow:hidden">Désactivé<div class="a" style="left:53px;top:0;width:1px;height:21px;background:#a3afb6"></div><div class="a" style="left:58px;top:9px;border:3px solid transparent;border-top:3px solid #a3afb6;border-bottom:0"></div></div>
<svg width="44" height="52" viewBox="0 0 44 52" style="left:400px;top:531px"><path d="M1 1H31L41 11V50H1Z" fill="#e3f0f3" stroke="#c4d4db"/><path d="M31 1V11H41" fill="#eef4f6" stroke="#d0dde3"/><path d="M21 10 34 26H27C26 33 27 38 30 43 23 40 16 33 17 26H9Z" fill="#a8e0b2"/></svg>
<div class="a" style="left:457px;top:560px;width:11px;height:11px;border:1px solid #a3afb6;border-radius:50%"></div>
<div class="t" style="left:472px;top:559px;color:#a3afb6">Vente</div>
<div class="a" style="left:527px;top:560px;width:11px;height:11px;border:1px solid #a3afb6;border-radius:50%"></div><div class="a" style="left:530px;top:563px;width:5px;height:5px;background:#a3afb6;border-radius:50%"></div>
<div class="t bd" style="left:542px;top:558px;color:#a3afb6;font-size:16px">Achat</div>
<div class="t c" style="left:491px;top:600px;color:#a3afb6">Qté</div>
<div class="a" style="left:444px;top:615px;width:96px;height:37px;border:1px solid #98a9b3;border-radius:2px;color:#98a8b0;font-size:24px;line-height:36px;text-align:right;padding-right:3px">1</div>
<div class="a" style="left:378px;top:654px;width:228px;height:1px;background:#aab8c0"></div>
<div class="ck ckd" style="left:416px;top:672px"></div><div class="t" style="left:432px;top:671px;color:#a3afb6">Ss</div>
<div class="num" style="left:451px;top:666px;background:#e3edf3;color:#a3afb6;border-color:#a3afb6">4</div><div class="t" style="left:464px;top:671px;color:#a3afb6">pts</div>
<div class="ck ckd" style="left:489px;top:672px"></div><div class="t" style="left:505px;top:671px;color:#a3afb6">Target</div>
<div class="num" style="left:543px;top:666px;background:#e3edf3;color:#a3afb6;border-color:#a3afb6">5</div><div class="t" style="left:556px;top:671px;color:#a3afb6">pts</div>

<div class="ck" style="left:365px;top:708px"></div><div class="t" style="left:380px;top:708px;letter-spacing:-.06px">Désactiver et sauver l'alerte pour utilisation future</div>

<div class="big" style="left:353px;top:732px;width:133px;height:68px"></div>
<div class="t c" style="left:420px;top:737px">Modifier Alerte</div>
<svg width="108" height="48" viewBox="0 0 108 48" style="left:366px;top:752px" fill="none"><path d="M1 20 7 28 14 31 22 31 27 18 36 21" stroke="#d83030" stroke-width="2.200"/><path d="M69 25 81 23 86 31 91 16 102 10 107 6" stroke="#d83030" stroke-width="2.200"/><path d="M7 28 10 30M18 32 22 30 27 18M69 25 74 22M86 31 91 16M104 9 107 4" stroke="#20b020" stroke-width="2.600"/><use href="#bell" x="35" y="2" width="38" height="42"/></svg>
<div class="big" style="left:497px;top:732px;width:133px;height:68px"></div>
<div class="t c" style="left:564px;top:737px">Supprimer</div>
<svg width="38" height="44" style="left:545px;top:754px"><use href="#trash" width="38" height="44"/></svg>
</body></html>
